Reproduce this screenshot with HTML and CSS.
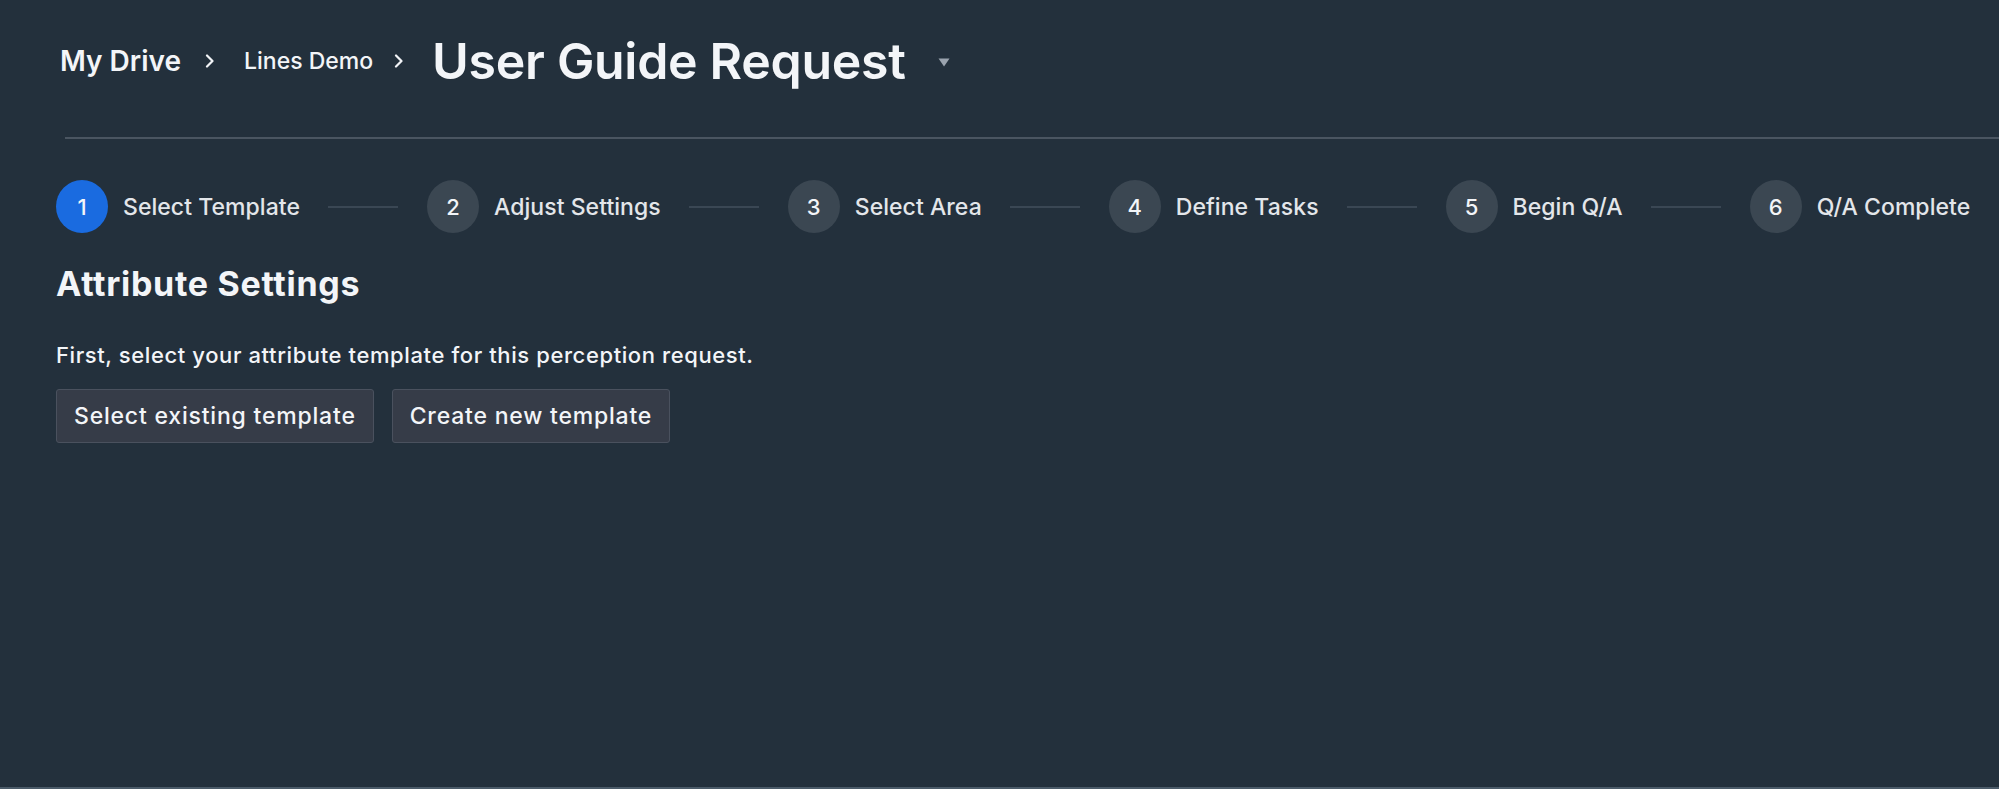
FILE: index.html
```html
<!DOCTYPE html>
<html lang="en">
<head>
<meta charset="utf-8">
<title>User Guide Request</title>
<link rel="stylesheet" href="styles.css">
</head>
<body>
<div class="page">
  <header class="breadcrumb">
    <span class="crumb-root">My Drive</span>
    <svg class="chev chev-1" width="10" height="14" viewBox="0 0 10 14"><path d="M2 1.5 L7.5 7 L2 12.5" fill="none" stroke="#f2f4f7" stroke-width="2.2" stroke-linecap="round" stroke-linejoin="round"/></svg>
    <span class="crumb-mid">Lines Demo</span>
    <svg class="chev chev-2" width="10" height="14" viewBox="0 0 10 14"><path d="M2 1.5 L7.5 7 L2 12.5" fill="none" stroke="#f2f4f7" stroke-width="2.2" stroke-linecap="round" stroke-linejoin="round"/></svg>
    <h1 class="crumb-title">User Guide Request</h1>
    <svg class="caret" width="12" height="9" viewBox="0 0 12 9"><path d="M0.5 0.5 H11.5 L6 8.5 Z" fill="#9aa3ae"/></svg>
  </header>
  <div class="divider"></div>

  <ol class="steps">
    <li class="step active"><span class="num">1</span><span class="label">Select Template</span></li>
    <li class="connector"></li>
    <li class="step"><span class="num">2</span><span class="label">Adjust Settings</span></li>
    <li class="connector"></li>
    <li class="step"><span class="num">3</span><span class="label">Select Area</span></li>
    <li class="connector"></li>
    <li class="step"><span class="num">4</span><span class="label">Define Tasks</span></li>
    <li class="connector"></li>
    <li class="step"><span class="num">5</span><span class="label">Begin Q/A</span></li>
    <li class="connector"></li>
    <li class="step"><span class="num">6</span><span class="label">Q/A Complete</span></li>
  </ol>

  <h2 class="section-title">Attribute Settings</h2>
  <p class="intro">First, select your attribute template for this perception request.</p>
  <div class="actions">
    <button class="btn">Select existing template</button>
    <button class="btn">Create new template</button>
  </div>
</div>
</body>
</html>
```

FILE: styles.css
```css
html, body {
  margin: 0;
  padding: 0;
}
body {
  background: #23303c;
  color: #f3f5f8;
  font-family: Inter, "Noto Sans", "Liberation Sans", sans-serif;
  min-height: 100vh;
  box-sizing: border-box;
  border-bottom: 2px solid #4b5b69;
}
.page {
  padding-left: 56px;
}
.breadcrumb {
  display: flex;
  align-items: center;
  height: 60px;
  margin-top: 31px;
  padding-left: 4px;
}
.crumb-root {
  font-size: 28px;
  font-weight: 600;
}
.chev-1 {
  margin-left: 24px;
  margin-right: 29px;
}
.crumb-mid {
  font-size: 23px;
  font-weight: 500;
}
.chev-2 {
  margin-left: 21px;
  margin-right: 28px;
}
.crumb-title {
  margin: 0;
  font-size: 50px;
  font-weight: 600;
  line-height: 60px;
  letter-spacing: -0.3px;
}
.caret {
  margin-left: 32px;
  margin-top: 2px;
}
.divider {
  height: 2px;
  background: #4a5561;
  margin-top: 46px;
  margin-left: 9px;
}
.steps {
  list-style: none;
  margin: 41px 0 0 0;
  padding: 0;
  display: flex;
  align-items: center;
  height: 53px;
}
.step {
  display: flex;
  align-items: center;
  gap: 15px;
}
.num {
  width: 52px;
  height: 53px;
  border-radius: 50%;
  background: #3b4752;
  color: #f3f5f8;
  font-size: 22px;
  font-weight: 500;
  display: flex;
  align-items: center;
  justify-content: center;
}
.step.active .num {
  background: #1a6be0;
}
.label {
  font-size: 23px;
  font-weight: 500;
  letter-spacing: 0.05px;
  color: #e3e6ea;
}
.connector {
  width: 70px;
  height: 2px;
  background: #3a4754;
  margin: 0 29px 0 28px;
}
.section-title {
  margin: 31px 0 0 0;
  font-size: 34px;
  line-height: 40px;
  font-weight: 700;
  letter-spacing: 0.7px;
}
.intro {
  margin: 37px 0 0 0;
  font-size: 22px;
  line-height: 28px;
  font-weight: 500;
  letter-spacing: 0.6px;
}
.actions {
  display: flex;
  gap: 18px;
  margin-top: 20px;
}
.btn {
  height: 54px;
  padding: 0 17px;
  background: #363c48;
  border: 1px solid #4a515e;
  border-radius: 3px;
  color: #f3f5f8;
  font-family: inherit;
  font-size: 23px;
  font-weight: 500;
  letter-spacing: 0.8px;
}
```
